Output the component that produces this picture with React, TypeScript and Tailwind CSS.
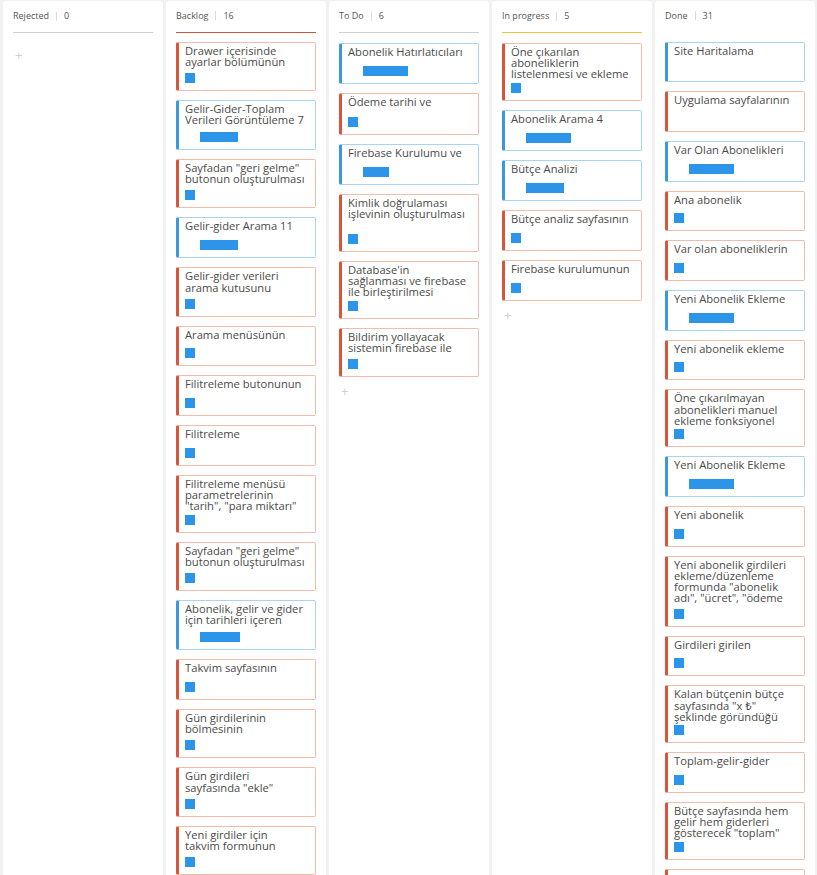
import React from "react"

type Card = {
  lines: string[]
  c: "r" | "b"
  h: number
  bar?: number
  none?: boolean
}

type Column = {
  title: string
  count: number
  line: string
  cards: Card[]
  add?: boolean
}

const columns: Column[] = [
  { title: "Rejected", count: 0, line: "bg-[#cfcfcf]", cards: [], add: true },
  {
    title: "Backlog",
    count: 16,
    line: "bg-[#c8573c]",
    cards: [
      { lines: ["Drawer içerisinde", "ayarlar bölümünün"], c: "r", h: 49.3 },
      { lines: ["Gelir-Gider-Toplam", "Verileri Görüntüleme 7"], c: "b", h: 50, bar: 38 },
      { lines: ['Sayfadan "geri gelme"', "butonun oluşturulması"], c: "r", h: 49.3 },
      { lines: ["Gelir-gider Arama 11"], c: "b", h: 41, bar: 38 },
      { lines: ["Gelir-gider verileri", "arama kutusunu"], c: "r", h: 49.3 },
      { lines: ["Arama menüsünün"], c: "r", h: 40.7 },
      { lines: ["Filitreleme butonunun"], c: "r", h: 40.7 },
      { lines: ["Filitreleme"], c: "r", h: 40.7 },
      { lines: ["Filitreleme menüsü", "parametrelerinin", '"tarih", "para miktarı"'], c: "r", h: 58 },
      { lines: ['Sayfadan "geri gelme"', "butonun oluşturulması"], c: "r", h: 49.3 },
      { lines: ["Abonelik, gelir ve gider", "için tarihleri içeren"], c: "b", h: 50, bar: 40 },
      { lines: ["Takvim sayfasının"], c: "r", h: 41 },
      { lines: ["Gün girdilerinin", "bölmesinin"], c: "r", h: 49.3 },
      { lines: ["Gün girdileri", 'sayfasında "ekle"'], c: "r", h: 49.3 },
      { lines: ["Yeni girdiler için", "takvim formunun"], c: "r", h: 49.3 },
    ],
  },
  {
    title: "To Do",
    count: 6,
    line: "bg-[#cfcfcf]",
    add: true,
    cards: [
      { lines: ["Abonelik Hatırlatıcıları"], c: "b", h: 41, bar: 45 },
      { lines: ["Ödeme tarihi ve"], c: "r", h: 42 },
      { lines: ["Firebase Kurulumu ve"], c: "b", h: 41, bar: 26 },
      { lines: ["Kimlik doğrulaması", "işlevinin oluşturulması"], c: "r", h: 58 },
      { lines: ["Database'in", "sağlanması ve firebase", "ile birleştirilmesi"], c: "r", h: 58 },
      { lines: ["Bildirim yollayacak", "sistemin firebase ile"], c: "r", h: 49.3 },
    ],
  },
  {
    title: "In progress",
    count: 5,
    line: "bg-[#e6c63c]",
    add: true,
    cards: [
      { lines: ["Öne çıkarılan", "aboneliklerin", "listelenmesi ve ekleme"], c: "r", h: 58 },
      { lines: ["Abonelik Arama 4"], c: "b", h: 41, bar: 45 },
      { lines: ["Bütçe Analizi"], c: "b", h: 40.7, bar: 38 },
      { lines: ["Bütçe analiz sayfasının"], c: "r", h: 41 },
      { lines: ["Firebase kurulumunun"], c: "r", h: 41 },
    ],
  },
  {
    title: "Done",
    count: 31,
    line: "bg-[#8cc152]",
    cards: [
      { lines: ["Site Haritalama"], c: "b", h: 40.7, none: true },
      { lines: ["Uygulama sayfalarının"], c: "r", h: 40.7, none: true },
      { lines: ["Var Olan Abonelikleri"], c: "b", h: 40.7, bar: 45 },
      { lines: ["Ana abonelik"], c: "r", h: 40.7 },
      { lines: ["Var olan aboneliklerin"], c: "r", h: 40.7 },
      { lines: ["Yeni Abonelik Ekleme"], c: "b", h: 40.7, bar: 45 },
      { lines: ["Yeni abonelik ekleme"], c: "r", h: 40.7 },
      { lines: ["Öne çıkarılmayan", "abonelikleri manuel", "ekleme fonksiyonel"], c: "r", h: 58 },
      { lines: ["Yeni Abonelik Ekleme"], c: "b", h: 40.7, bar: 45 },
      { lines: ["Yeni abonelik"], c: "r", h: 40.7 },
      {
        lines: ["Yeni abonelik girdileri", "ekleme/düzenleme", 'formunda "abonelik', 'adı", "ücret", "ödeme'],
        c: "r",
        h: 71,
      },
      { lines: ["Girdileri girilen"], c: "r", h: 40.7 },
      { lines: ["Kalan bütçenin bütçe", 'sayfasında "x ₺"', "şeklinde göründüğü"], c: "r", h: 58 },
      { lines: ["Toplam-gelir-gider"], c: "r", h: 40.7 },
      { lines: ["Bütçe sayfasında hem", "gelir hem giderleri", 'gösterecek "toplam"'], c: "r", h: 58 },
      { lines: [], c: "r", h: 40.7 },
    ],
  },
]

function TaskCard({ card }: { card: Card }) {
  const red = card.c === "r"
  return (
    <div
      className={`flex flex-col shrink-0 rounded-[2px] border border-l-[3px] bg-white pl-[6px] pr-[3px] pt-[2px] pb-[7px] ${
        red ? "border-[#efbcae] border-l-[#d9553a]" : "border-[#a9d3f0] border-l-[#3b98dc]"
      }`}
      style={{ height: card.h }}
    >
      <div className="text-[11.2px] leading-[11.2px] text-[#4a4a4a] whitespace-nowrap">
        {card.lines.map((l, i) => (
          <div key={i}>{l}</div>
        ))}
      </div>
      {!card.none && (
        <div className="mt-auto flex">
          {card.bar ? (
            <div className="ml-[15px] h-[10px] bg-[#2c95ea]" style={{ width: card.bar }} />
          ) : (
            <div className="h-[10px] w-[10px] bg-[#2c95ea]" />
          )}
        </div>
      )}
    </div>
  )
}

export default function App() {
  return (
    <div
      className="flex h-screen gap-[3px] overflow-hidden bg-[#f1f1f1] px-[3px] pt-px"
      style={{ fontFamily: '"Open Sans", "Noto Sans", sans-serif' }}
    >
      {columns.map((col) => (
        <div key={col.title} className="flex w-[160px] shrink-0 flex-col rounded-t-[3px] bg-white px-[10px] pt-[8px]">
          <div className="flex h-[14px] items-center text-[9px] text-[#555]">
            <span>{col.title}</span>
            <span className="mx-[7px] h-[9px] w-px bg-[#dcdcdc]" />
            <span>{col.count}</span>
          </div>
          <div className={`mt-[9px] h-px ${col.line}`} />
          {col.cards.length > 0 && (
            <div className="mt-[10px] flex flex-col gap-[9px]">
              {col.cards.map((card, i) => (
                <TaskCard key={i} card={card} />
              ))}
            </div>
          )}
          {col.add && (
            <div className={`${col.cards.length ? "mt-[8px]" : "mt-[16px]"} pl-[2px] text-[13px] leading-[13px] text-[#cfcfcf]`}>
              +
            </div>
          )}
        </div>
      ))}
    </div>
  )
}
